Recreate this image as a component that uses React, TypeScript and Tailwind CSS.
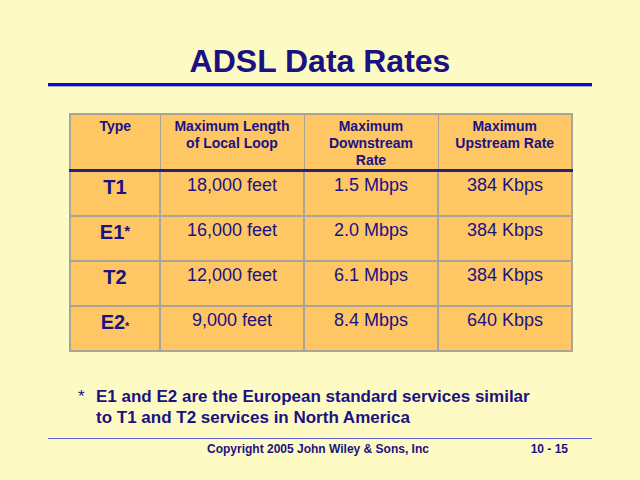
const rows = [
  { type: 'T1', star: null, length: '18,000 feet', down: '1.5 Mbps', up: '384 Kbps' },
  { type: 'E1', star: 'big', length: '16,000 feet', down: '2.0 Mbps', up: '384 Kbps' },
  { type: 'T2', star: null, length: '12,000 feet', down: '6.1 Mbps', up: '384 Kbps' },
  { type: 'E2', star: 'small', length: '9,000 feet', down: '8.4 Mbps', up: '640 Kbps' },
]

export default function App() {
  return (
    <div className="w-[640px] h-[480px] bg-[#fdfbc3] text-[#1a1283] flex flex-col font-['Liberation_Sans',Arial,sans-serif] overflow-hidden">
      {/* Title */}
      <h1 className="pt-[43px] text-center text-[32px] leading-[36px] font-bold">ADSL Data Rates</h1>
      <div className="mx-[48px] mt-[4px]">
        <div className="h-[3px] bg-[#0a0ad0]" />
        <div className="h-[1px] bg-[#a8a8b8]" />
      </div>

      {/* Table */}
      <div className="ml-[69px] mt-[26px] w-[502px]">
        <table className="w-full table-fixed border-collapse bg-[#fec764] border-2 border-[#a9a59a]">
          <colgroup>
            <col className="w-[90px]" />
            <col className="w-[144px]" />
            <col className="w-[134px]" />
            <col className="w-[134px]" />
          </colgroup>
          <thead>
            <tr className="h-[55px] border-b-[3px] border-b-[#23237e]">
              <th className="align-top pt-[3px] text-[14px] leading-[17px] font-bold border-r border-[#a9a59a]">Type</th>
              <th className="align-top pt-[3px] text-[14px] leading-[17px] font-bold border-r border-[#a9a59a]">
                Maximum Length<br />of Local Loop
              </th>
              <th className="align-top pt-[3px] text-[14px] leading-[17px] font-bold border-r border-[#a9a59a]">
                Maximum<br />Downstream<br />Rate
              </th>
              <th className="align-top pt-[3px] text-[14px] leading-[17px] font-bold">
                Maximum<br />Upstream Rate
              </th>
            </tr>
          </thead>
          <tbody>
            {rows.map((r, i) => (
              <tr key={r.type} className={`h-[45px] ${i < rows.length - 1 ? 'border-b-2 border-[#a9a59a]' : ''}`}>
                <td className="align-top pt-[4px] text-center text-[20px] leading-[23px] font-bold border-r-2 border-[#a9a59a]">
                  {r.type}
                  {r.star === 'big' && <span className="relative top-[-3px] text-[15px]">*</span>}
                  {r.star === 'small' && <span className="relative top-[1px] text-[11px]">*</span>}
                </td>
                <td className="align-top pt-[3px] text-center text-[18px] leading-[21px] border-r-2 border-[#a9a59a]">{r.length}</td>
                <td className="align-top pt-[3px] text-center text-[18px] leading-[21px] border-r-2 border-[#a9a59a]">{r.down}</td>
                <td className="align-top pt-[3px] text-center text-[18px] leading-[21px]">{r.up}</td>
              </tr>
            ))}
          </tbody>
        </table>
      </div>

      {/* Footnote */}
      <div className="mt-[34px] ml-[78px] flex text-[17px] leading-[21px] font-bold">
        <span className="w-[18px] font-normal">*</span>
        <p>
          E1 and E2 are the European standard services similar
          <br />
          to T1 and T2 services in North America
        </p>
      </div>

      {/* Footer */}
      <div className="mt-auto mb-[24px]">
        <div className="mx-[48px] h-[1px] bg-[#5e5ed6]" />
        <div className="mt-[3px] flex text-[12px] leading-[14px] font-bold">
          <span className="ml-[207px]">Copyright 2005 John Wiley &amp; Sons, Inc</span>
          <span className="ml-auto mr-[72px]">10 - 15</span>
        </div>
      </div>
    </div>
  )
}
